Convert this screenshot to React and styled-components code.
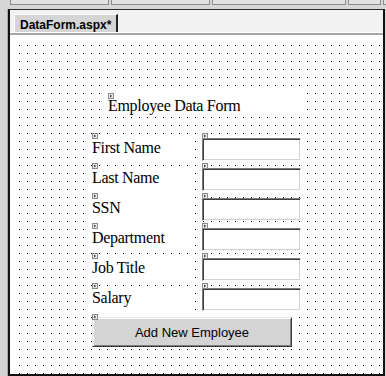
import React from "react";
import styled, { createGlobalStyle } from "styled-components";

const GlobalStyle = createGlobalStyle`
  html, body {
    margin: 0;
    padding: 0;
    background: #d6d6d6;
  }
`;

const Window = styled.div`
  width: 386px;
  height: 376px;
  overflow: hidden;
  display: flex;
  flex-direction: column;
  background: #d6d6d6;
`;

const TopBar = styled.div`
  height: 9px;
  display: flex;
  align-items: flex-start;
  gap: 2px;
  padding-left: 10px;
`;

const BarSegment = styled.div`
  width: ${(p) => p.$w}px;
  height: 4px;
  background: #e2e2e2;
  border: 1px solid #8e8e8e;
  border-top: none;
  flex-shrink: 0;
`;

const Main = styled.div`
  flex: 1;
  display: flex;
`;

const LeftRail = styled.div`
  width: 7px;
  border-right: 1px solid #a9a9a9;
  background: #d4d4d4;
`;

const Frame = styled.div`
  width: 373px;
  display: flex;
  flex-direction: column;
  border-top: 1px solid #2a2a2a;
  border-left: 2px solid #111;
  border-right: 2px solid #111;
  border-bottom: 2px solid #111;
`;

const TabStrip = styled.div`
  height: 22px;
  display: flex;
  align-items: flex-end;
  padding-left: 4px;
  background: #f2f2f2;
  border-bottom: 1px solid #fff;
`;

const Tab = styled.div`
  height: 18px;
  box-sizing: border-box;
  padding: 2px 5px 0 5px;
  background: #d5d5d5;
  border-top: 1px solid #fafafa;
  border-left: 1px solid #fafafa;
  border-right: 2px solid #222;
  font-family: "Liberation Sans", Arial, sans-serif;
  font-weight: bold;
  font-size: 12px;
  line-height: 16px;
  color: #000;
  white-space: nowrap;
`;

const Surface = styled.div`
  flex: 1;
  display: flex;
  padding: 10px 0 0 9px;
  background: #fff;
  border-top: 2px solid #a6a6a6;
`;

/* 1px black dot at the top-left of every 8px cell */
const Canvas = styled.div`
  flex: 1;
  padding: 44px 0 0 73px;
  background-color: #000;
  background-image:
    linear-gradient(to right, transparent 1px, #fff 1px),
    linear-gradient(to bottom, transparent 1px, #fff 1px);
  background-size: 8px 8px;
  font-family: "Liberation Serif", "Times New Roman", serif;
  color: #000;
`;

const Control = styled.div`
  position: relative;
`;

const GlyphBox = styled.svg`
  position: absolute;
  top: ${(p) => p.$top || 0}px;
  left: ${(p) => p.$left || 0}px;
  display: block;
`;

const Glyph = ({ top, left }) => (
  <GlyphBox
    $top={top}
    $left={left}
    width="6"
    height="6"
    viewBox="0 0 6 6"
    shapeRendering="crispEdges"
  >
    <rect x="0.5" y="0.5" width="5" height="5" fill="#ececec" stroke="#8a8a8a" />
    <polygon points="2,1.5 4.2,3 2,4.5" fill="#444" shapeRendering="auto" />
  </GlyphBox>
);

const Title = styled(Control)`
  margin-left: 12px;
  width: 196px;
  height: 27px;
  box-sizing: border-box;
  padding: 8px 0 0 4px;
  background: #fff;
  font-size: 16px;
  line-height: 18px;
  letter-spacing: -0.3px;
  white-space: nowrap;
`;

const FormTable = styled.div`
  margin-top: 17px;
  display: grid;
  grid-template-columns: 110px 99px;
  grid-auto-rows: 30px;
`;

const LabelText = styled.div`
  margin: 4px 0 0 -1px;
  width: 101px;
  height: 25px;
  box-sizing: border-box;
  padding: 1px 0 0 1px;
  background: #fff;
  font-size: 16px;
  line-height: 19px;
  letter-spacing: -0.3px;
  white-space: nowrap;
`;

const TextBox = styled.div`
  margin-top: 5px;
  height: 23px;
  box-sizing: border-box;
  background: #fff;
  border: 1px solid;
  border-color: #7c7c7c #fff #fff #7c7c7c;
  box-shadow: inset 1px 1px 0 #3c3c3c, inset -1px -1px 0 #d2d2d2;
`;

const ButtonCell = styled(Control)`
  margin-top: 1px;
  padding-top: 3px;
`;

const Button = styled.div`
  width: 200px;
  height: 30px;
  box-sizing: border-box;
  display: flex;
  align-items: center;
  justify-content: center;
  background: #d4d4d4;
  border: 1px solid;
  border-color: #e6e6e6 #3a3a3a #3a3a3a #e6e6e6;
  box-shadow: inset 1px 1px 0 #fff, inset -1px -1px 0 #808080;
  font-family: "Liberation Sans", Arial, sans-serif;
  font-size: 13px;
  color: #000;
`;

const fields = ["First Name", "Last Name", "SSN", "Department", "Job Title", "Salary"];

export default function App() {
  return (
    <Window>
      <GlobalStyle />
      <TopBar>
        <BarSegment $w={97} />
        <BarSegment $w={97} />
        <BarSegment $w={132} />
        <BarSegment $w={31} />
        <BarSegment $w={10} />
      </TopBar>
      <Main>
        <LeftRail />
        <Frame>
          <TabStrip>
            <Tab>DataForm.aspx*</Tab>
          </TabStrip>
          <Surface>
            <Canvas>
              <Title>
                <Glyph top={4} left={4} />
                Employee Data Form
              </Title>
              <FormTable>
                {fields.map((f) => (
                  <React.Fragment key={f}>
                    <Control>
                      <LabelText>{f}</LabelText>
                      <Glyph />
                    </Control>
                    <Control>
                      <TextBox />
                      <Glyph />
                    </Control>
                  </React.Fragment>
                ))}
              </FormTable>
              <ButtonCell>
                <Button>Add New Employee</Button>
                <Glyph />
              </ButtonCell>
            </Canvas>
          </Surface>
        </Frame>
      </Main>
    </Window>
  );
}
